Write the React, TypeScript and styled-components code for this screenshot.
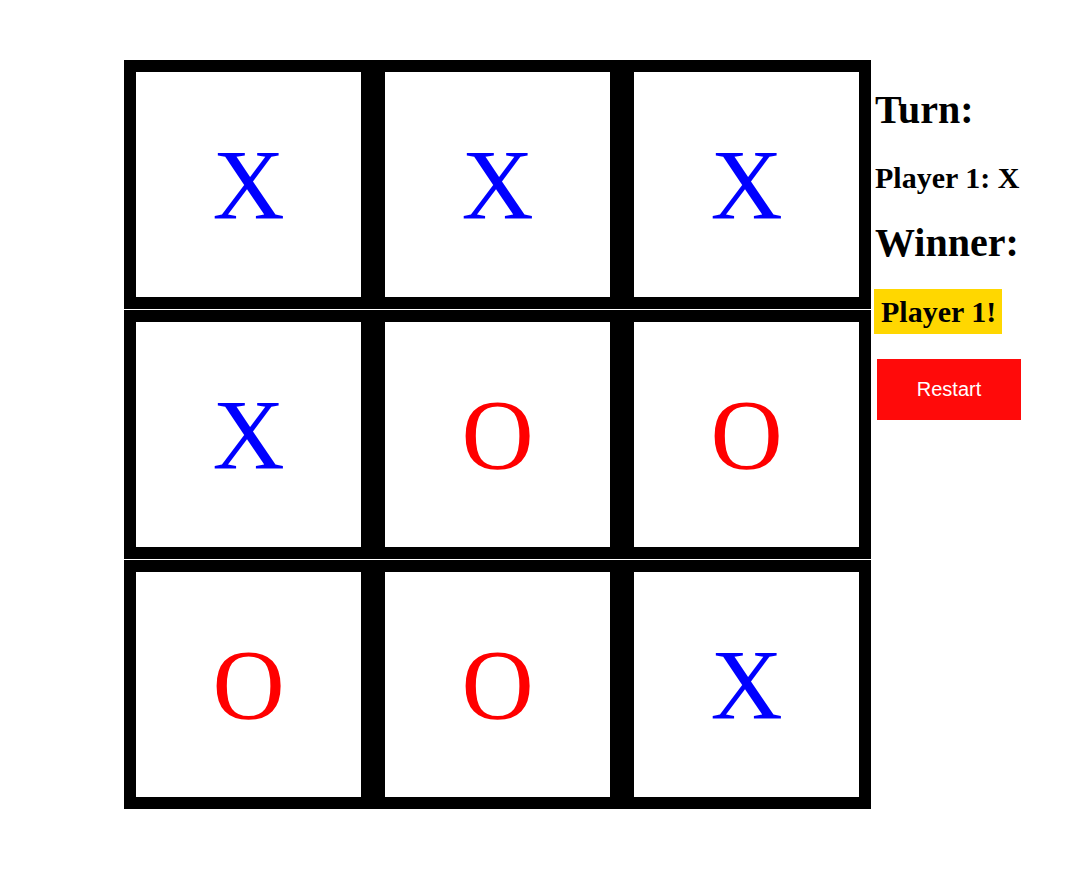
import React from "react";
import styled, { createGlobalStyle } from "styled-components";

const Global = createGlobalStyle`
  html, body { margin: 0; padding: 0; background: #fff; }
  body { font-family: "Liberation Serif", "Times New Roman", serif; }
`;

const Page = styled.div`
  display: flex;
  align-items: flex-start;
  gap: 3px;
  padding: 60px 0 0 124px;
`;

const Board = styled.div`
  display: flex;
  flex-direction: column;
  gap: 1px;
`;

const Row = styled.div`
  display: flex;
`;

const Cell = styled.div<{ $mark: string }>`
  width: 225px;
  height: 225px;
  border: 12px solid #000;
  background: #fff;
  display: flex;
  align-items: center;
  justify-content: center;
  font-family: "Liberation Serif", "Times New Roman", serif;
  font-size: 100px;
  line-height: 100px;
  color: ${(p) => (p.$mark === "X" ? "#0000ff" : "#ff0000")};
`;

const Panel = styled.div`
  display: flex;
  flex-direction: column;
  align-items: flex-start;
`;

const Heading = styled.div<{ $top: number }>`
  margin-top: ${(p) => p.$top}px;
  margin-left: 1px;
  font-weight: bold;
  font-size: 40px;
  line-height: 40px;
`;

const TurnText = styled.div`
  margin-top: 31px;
  margin-left: 1px;
  font-weight: bold;
  font-size: 30px;
  line-height: 34px;
`;

const WinnerBadge = styled.div`
  margin-top: 26px;
  height: 45px;
  padding: 0 6px 0 7px;
  background: #ffd700;
  font-weight: bold;
  font-size: 30px;
  line-height: 45px;
`;

const RestartButton = styled.button`
  margin: 25px 0 0 3px;
  width: 144px;
  height: 61px;
  border: none;
  background: #ff0a0a;
  color: #fff;
  font-family: "Liberation Sans", Arial, sans-serif;
  font-size: 20px;
  padding: 0;
  cursor: pointer;
`;

const cells = [
  ["X", "X", "X"],
  ["X", "O", "O"],
  ["O", "O", "X"],
];

export default function App() {
  return (
    <>
      <Global />
      <Page>
        <Board>
          {cells.map((row, r) => (
            <Row key={r}>
              {row.map((m, c) => (
                <Cell key={c} $mark={m}>
                  {m}
                </Cell>
              ))}
            </Row>
          ))}
        </Board>
        <Panel>
          <Heading $top={30}>Turn:</Heading>
          <TurnText>Player 1: X</TurnText>
          <Heading $top={28}>Winner:</Heading>
          <WinnerBadge>Player 1!</WinnerBadge>
          <RestartButton>Restart</RestartButton>
        </Panel>
      </Page>
    </>
  );
}
